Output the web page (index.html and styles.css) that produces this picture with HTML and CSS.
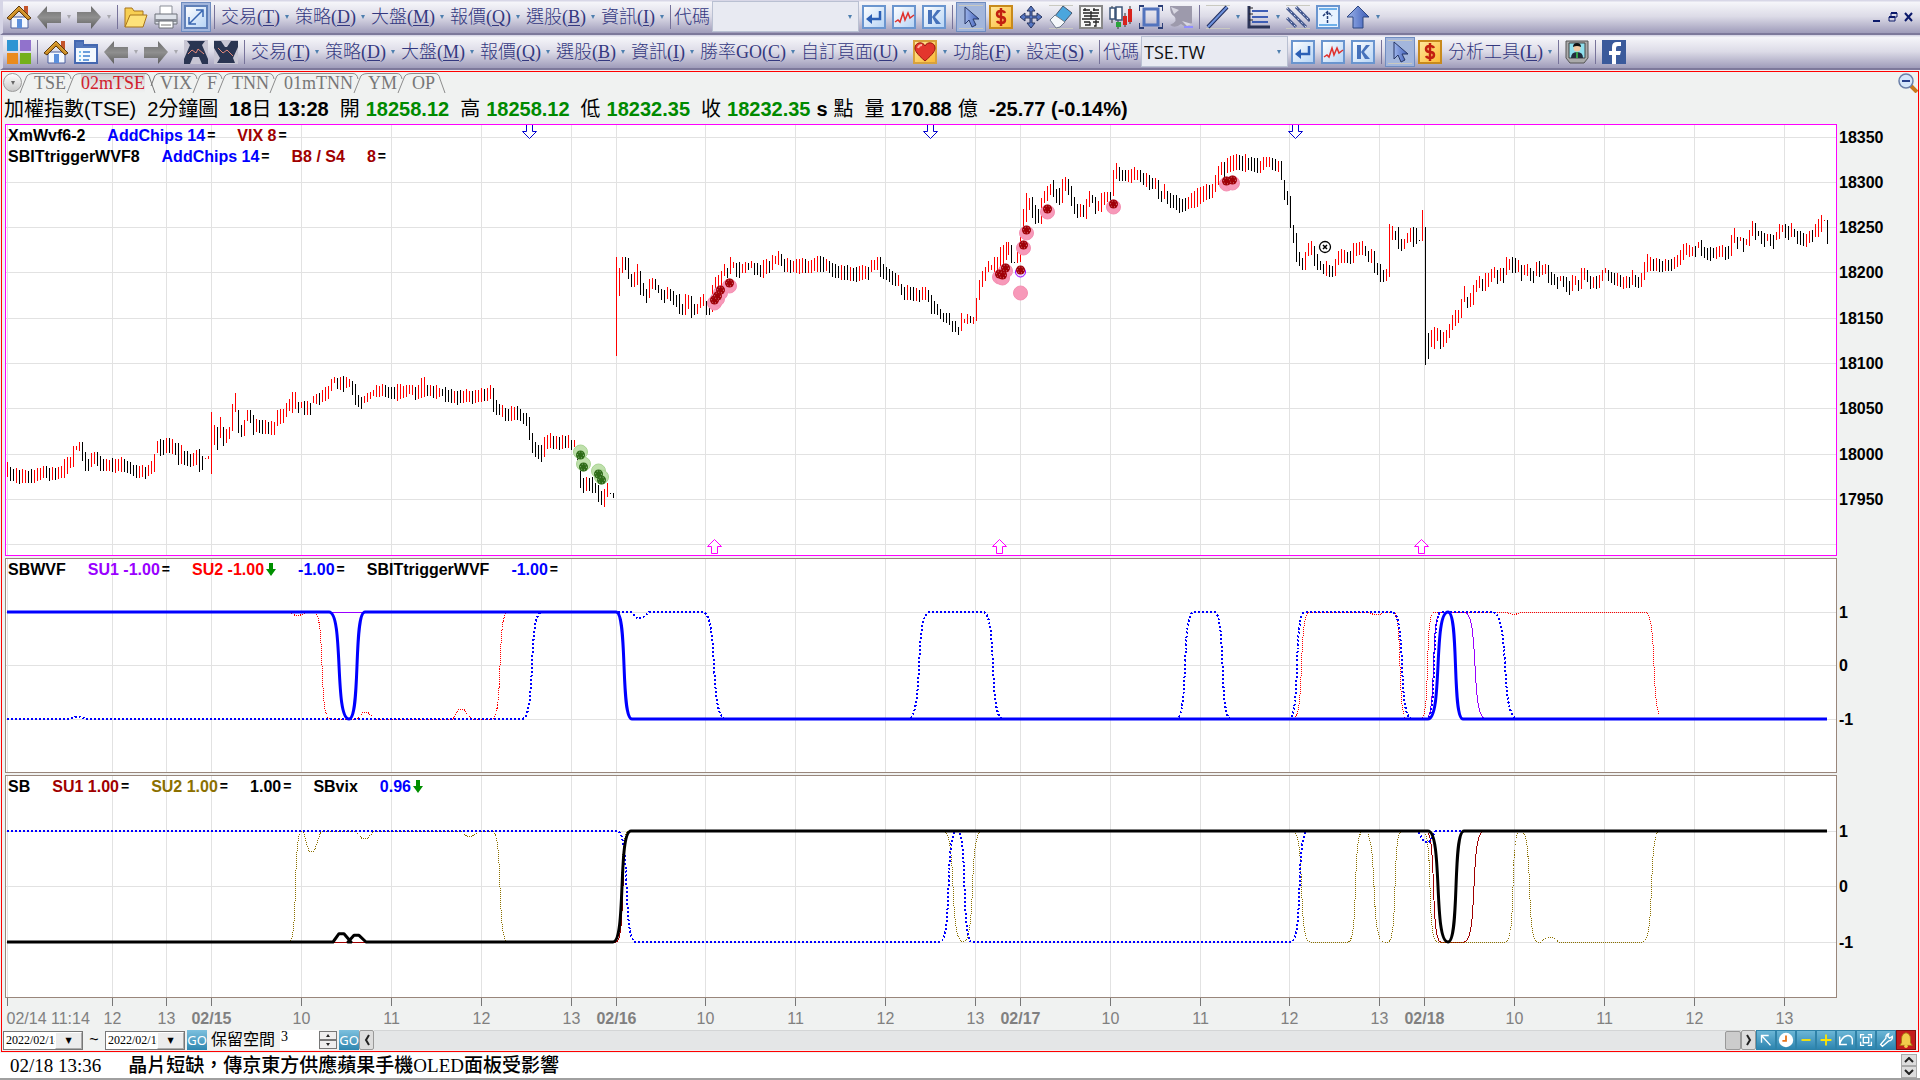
FILE: index.html
```html
<!DOCTYPE html>
<html lang="zh-Hant">
<head>
<meta charset="utf-8">
<title>加權指數(TSE) 2分鐘圖</title>
<link rel="stylesheet" href="styles.css">
</head>
<body>
<svg class="sprite" aria-hidden="true">
  <defs>
    <linearGradient id="g-arrow" x1="0" y1="0" x2="0" y2="1"><stop offset="0" stop-color="#6d6d6d"/><stop offset=".5" stop-color="#8f8f8f"/><stop offset="1" stop-color="#5c5c5c"/></linearGradient>
    <linearGradient id="g-tile" x1="0" y1="0" x2="1" y2="1"><stop offset="0" stop-color="#fff"/><stop offset="1" stop-color="#b5d3f5"/></linearGradient>
    <linearGradient id="g-gold" x1="0" y1="0" x2="1" y2="1"><stop offset="0" stop-color="#ffe9a0"/><stop offset="1" stop-color="#fbb832"/></linearGradient>
    <linearGradient id="g-blue" x1="0" y1="0" x2="1" y2="0"><stop offset="0" stop-color="#9db4ea"/><stop offset="1" stop-color="#3c5cb8"/></linearGradient>
  </defs>
  <symbol id="home" viewBox="0 0 24 24"><path d="M17 1h4v8h-4z" fill="#c4552c"/><path d="M4 12h17v11H4z" fill="#f4f8ff" stroke="#4a5e9e"/><path d="M10 14h5v9h-5z" fill="#5b8fdc"/><path d="M0 13 12 1l12 12-3 2-9-9-9 9z" fill="#c98a24" stroke="#5a3a10"/><path d="M2 12.500 12 2.500l10 10" fill="none" stroke="#e8b040"/></symbol>
  <symbol id="back" viewBox="0 0 24 24"><path d="M0 12 10 1v6h14v11H10v6z" fill="url(#g-arrow)"/></symbol>
  <symbol id="fwd" viewBox="0 0 24 24"><path d="M24 12 14 1v6H0v11h14v6z" fill="url(#g-arrow)"/></symbol>
  <symbol id="folder" viewBox="0 0 24 24"><path d="M1 22V3h7l2 3h9v4" fill="#f7cf52" stroke="#a8741a"/><path d="M1 22 6 10h17l-4 12z" fill="#fde27a" stroke="#a8741a"/></symbol>
  <symbol id="print" viewBox="0 0 24 24"><path d="M6 1h12v9H6z" fill="#fff" stroke="#8b8f98"/><path d="M1 9h22v10H1z" fill="#dfe3ea" stroke="#6c7078"/><path d="M1 14h22v3H1z" fill="#8c9099"/><path d="M5 16h14v7H5z" fill="#fff" stroke="#6c7078"/><path d="M7 20h10" stroke="#777"/></symbol>
  <symbol id="expand" viewBox="0 0 24 24"><path d="M1 1h22v22H1z" fill="url(#g-tile)" stroke="#5f80b8" stroke-width="2"/><path d="m6 18 12-12M12 5h7v7M5 12v7h7" fill="none" stroke="#3765b0" stroke-width="1.500"/></symbol>
  <symbol id="enter" viewBox="0 0 24 24"><path d="M1 1h22v22H1z" fill="url(#g-tile)" stroke="#6a95cf" stroke-width="2"/><path d="M18 6v8H8" fill="none" stroke="#2b5fb5" stroke-width="2.500"/><path d="m4 14 6-5v10z" fill="#2b5fb5"/></symbol>
  <symbol id="wave" viewBox="0 0 24 24"><path d="M1 1h22v22H1z" fill="url(#g-tile)" stroke="#6a95cf" stroke-width="2"/><path d="m3 17 3-2 2 2 3-9 2 7 3-7 2 5 4-3" fill="none" stroke="#e0302c" stroke-width="1.500"/></symbol>
  <symbol id="kline" viewBox="0 0 24 24"><path d="M1 1h22v22H1z" fill="url(#g-tile)" stroke="#6a95cf" stroke-width="2"/><path d="M6 5h4v14H6zM10 12l5-7h4l-6 7 6 7h-5z" fill="#4672bb"/></symbol>
  <symbol id="cursor" viewBox="0 0 24 24"><path d="M0 .5h24M0 23.500h24" stroke="#c9c9c0"/><path d="M6 2v17l4-4 3 7 4-2-3-6h6z" fill="url(#g-blue)" stroke="#273766"/></symbol>
  <symbol id="dollar" viewBox="0 0 24 24"><path d="M1 1h22v22H1z" fill="url(#g-gold)" stroke="#c88a1c" stroke-width="2"/><path d="M16 8q-1-2-4-2-4 0-4 3t4 3q4 0 4 3t-4 3q-3 0-4-2M12 3v18" fill="none" stroke="#c21f10" stroke-width="2.500"/></symbol>
  <symbol id="move" viewBox="0 0 24 24"><path d="M12 1l4 5h-3v5h5V8l5 4-5 4v-3h-5v5h3l-4 5-4-5h3v-5H6v3l-5-4 5-4v3h5V6H8z" fill="#5777c4" stroke="#26345e"/></symbol>
  <symbol id="eraser" viewBox="0 0 24 24"><path d="M0 .5h24M0 23.500h24" stroke="#c9c9c0"/><path d="M14 1 23 8 11 22 2 16z" fill="#4ba6dd" stroke="#44566e"/><path d="m1 15 5-5 10 7-5 5-4 1z" fill="#f4f7fa" stroke="#6d7a8a"/></symbol>
  <symbol id="abacus" viewBox="0 0 24 24"><path d="M1 1h22v22H1z" fill="#f6f6f6" stroke="#888" stroke-width="2"/><path d="M4 5h7M14 5h6M6 3v3M15 3v3M4 8h16M12 6v8M5 11h14M3 14h18M5 17h6M14 17h6M6 20h5v-3M17 15v6h-2" fill="none" stroke="#222" stroke-width="1.300"/></symbol>
  <symbol id="candles" viewBox="0 0 24 24"><path d="M3 1v17M9 15v9M16 8v14M21 1v18" stroke="#333"/><path d="M1 3h5v11H1zM7 2h6v13H7z" fill="#fff" stroke="#3d5578" stroke-width="1.500"/><path d="M7 17h5v5H7z" fill="#2aa33a"/><path d="M14 11h4v9h-4zM19 4h4v13h-4z" fill="#d8231c"/></symbol>
  <symbol id="frame" viewBox="0 0 24 24"><path d="M5 4h14v16H5z" fill="none" stroke="#5273bd" stroke-width="3"/><path d="M0 6V1h5M19 1h5v5M24 18v5h-5M5 23H0v-5" fill="none" stroke="#2c3f78" stroke-width="2"/></symbol>
  <symbol id="smudge" viewBox="0 0 24 24"><path d="M1 1h22v17q-5 6-11 1-6 5-11 1 9-4 4-9-4-2-4-10z" fill="#9d9aac"/><path d="m2 2 8 3-5 4zM13 16l5 5 5-2" fill="#d8d7e2"/><path d="M15 22h9" stroke="#8f8dff" stroke-width="2"/></symbol>
  <symbol id="line" viewBox="0 0 24 24"><path d="M0 .5h24M0 23.500h24" stroke="#c9c9c0"/><path d="M2 22 21 2" stroke="#1f2c5c" stroke-width="4"/><path d="M2 22 21 2" stroke="#6f92dc" stroke-width="2"/></symbol>
  <symbol id="axis" viewBox="0 0 24 24"><path d="M3 1v21h21" fill="none" stroke="#2c3458" stroke-width="3"/><path d="M6 6h16M6 12h16M6 17h16" stroke="#3f5eb5" stroke-width="2"/><path d="M3 3h4M3 9h4M3 15h4" stroke="#222"/></symbol>
  <symbol id="hatch" viewBox="0 0 24 24"><path d="M0 .5h24M0 23.500h24" stroke="#c9c9c0"/><path d="m1 3 19 19M10 2l14 14M1 13l9 9" stroke="#44588e" stroke-width="3"/><path d="m1 3 19 19M10 2l14 14M1 13l9 9" stroke="#cdd8f2" stroke-dasharray="2 3"/></symbol>
  <symbol id="range" viewBox="0 0 24 24"><path d="M1 1h22v22H1z" fill="#e9f3ff" stroke="#6a95cf" stroke-width="2"/><path d="M3 4h18M3 20h18" stroke="#6fb1ea" stroke-width="2"/><path d="M11.500 18V7M7 11l4.500-4.500L16 11" fill="none" stroke="#223c78" stroke-width="1.500" stroke-dasharray="3 1"/></symbol>
  <symbol id="up" viewBox="0 0 24 24"><path d="M12 1 23 12h-6v11H7V12H1z" fill="url(#g-blue)" stroke="#2d4680"/></symbol>
  <symbol id="tiles" viewBox="0 0 24 24"><path d="M0 0h11v11H0z" fill="#2e95d3"/><path d="M13 0h11v11H13z" fill="#9172cc"/><path d="M0 13h11v11H0z" fill="#e98b1e"/><path d="M13 13h11v11H13z" fill="#74b01c"/></symbol>
  <symbol id="pages" viewBox="0 0 24 24"><path d="M1 1h8v4h14v18H1z" fill="#f3f9ff" stroke="#4568b0" stroke-width="2"/><path d="M2 2h7v4h13v2H2z" fill="#5578bc"/><path d="M9 12h7M9 16h7M9 20h6" stroke="#3f7fcf" stroke-width="1.500"/><path d="M5 12h2M5 16h2M5 20h2" stroke="#4fb0e8" stroke-width="1.500"/></symbol>
  <symbol id="peak" viewBox="0 0 24 24"><path d="M0 0h24v24H0z" fill="#c8c6d4"/><path d="M3 1h18l-3 4 6 14v5h-6l-3-7H9l-3 7H0v-5L6 5z" fill="#2a3552"/><path d="m4 14 4-4 4 3 2-4 6 5" fill="none" stroke="#e58a7c"/></symbol>
  <symbol id="valley" viewBox="0 0 24 24"><path d="M0 0h24v24H0z" fill="#c8c6d4"/><path d="M0 1h7l4 6h2l4-6h7v6l-5 11 2 5H3l3-5L0 8z" fill="#2a3552"/><path d="m4 8 5 5 4-3 6 6" fill="none" stroke="#e58a7c"/></symbol>
  <symbol id="heart" viewBox="0 0 24 24"><path d="M1 1h22v22H1z" fill="url(#g-gold)" stroke="#d8a23c" stroke-width="2"/><path d="M12 21C4 14 2 11 2 8c0-6 8-7 10-2 2-5 10-4 10 2 0 3-2 6-10 13z" fill="#e3362d" stroke="#98140f"/><path d="M5 8q1-3 4-3" stroke="#ffb0a0" stroke-width="2" fill="none"/></symbol>
  <symbol id="person" viewBox="0 0 24 24"><path d="M1 1h22v17l-4 5H5l-4-5z" fill="#aaa" stroke="#555"/><path d="M4 3h16v15H4z" fill="#8fe0ee" stroke="#444"/><circle cx="12" cy="8" r="3.500" fill="#f1c7a0"/><path d="M8 7q0-4 4-4t4 4q-4-2-8 0z" fill="#111"/><path d="M6 18q0-6 6-6t6 6z" fill="#222c3c"/><path d="M11 12h2v6h-2z" fill="#32a04a"/></symbol>
  <symbol id="fb" viewBox="0 0 24 24"><path d="M0 0h24v24H0z" fill="#3a5a9b"/><path d="M14 24v-9h4l1-4h-5V8q0-2 2-2h3V2h-4q-5 0-5 5v4H7v4h3v9z" fill="#fff"/></symbol>
  <symbol id="zoomout" viewBox="0 0 20 20"><path d="m13 13 6 6" stroke="#c8781c" stroke-width="4"/><circle cx="8" cy="8" r="7" fill="#d5e6fb" stroke="#6a7fa8" stroke-width="1.500"/><path d="M4 8h8" stroke="#27408c" stroke-width="2"/></symbol>
  <symbol id="nw" viewBox="0 0 20 20"><path d="m5 5 10 11M5 13V5h8" fill="none" stroke="#fff" stroke-width="1.500"/></symbol>
  <symbol id="clock" viewBox="0 0 20 20"><circle cx="10" cy="10" r="8" fill="#fff"/><path d="M10 5v6H6" fill="none" stroke="#e8741c" stroke-width="2"/></symbol>
  <symbol id="minus" viewBox="0 0 20 20"><path d="M5 10h10" stroke="#ffe600" stroke-width="2"/></symbol>
  <symbol id="plus" viewBox="0 0 20 20"><path d="M4 10h12M10 4v12" stroke="#ffe600" stroke-width="2"/></symbol>
  <symbol id="undo" viewBox="0 0 20 20"><path d="M3 6v9h8M3 15C6 3 16 3 17 9v6" fill="none" stroke="#fff" stroke-width="1.500"/></symbol>
  <symbol id="fit" viewBox="0 0 20 20"><path d="M7 7h6v6H7zM4 8V4h4M12 4h4v4M16 12v4h-4M8 16H4v-4" fill="none" stroke="#fff" stroke-width="1.500"/></symbol>
  <symbol id="wrench" viewBox="0 0 20 20"><path d="M13 3a4 4 0 0 0-3 5l-6 7 2 2 7-6a4 4 0 0 0 4-5l-3 2-2-2z" fill="none" stroke="#fff" stroke-width="1.500"/></symbol>
  <symbol id="bell" viewBox="0 0 20 20"><path d="M10 2q5 1 5 7v4l2 3H3l2-3V9q0-6 5-7z" fill="#f2cc4c" stroke="#a87410"/><circle cx="10" cy="17" r="2" fill="#f2cc4c"/></symbol>
  <symbol id="split" viewBox="0 0 15 20"><path d="M0 .5Q4 .5 5 6M1 20 7 5Q8 .5 15 .5" fill="none" stroke="#8c8c8c"/></symbol>
  <symbol id="split-on" viewBox="0 0 15 20"><path d="M0 .5Q4 .5 5 6L10 20M6 13 9 5Q10 .5 15 .5" fill="none" stroke="#777"/></symbol>
</svg>

<nav class="toolbar" aria-label="工具列">
  <button class="icon" aria-label="首頁"><svg><use href="#home"/></svg></button>
  <button class="icon" aria-label="上一頁"><svg><use href="#back"/></svg></button><i class="caret dim"></i>
  <button class="icon" aria-label="下一頁"><svg><use href="#fwd"/></svg></button><i class="caret dim"></i>
  <span class="sep"></span>
  <button class="icon" aria-label="開啟"><svg><use href="#folder"/></svg></button>
  <button class="icon" aria-label="列印"><svg><use href="#print"/></svg></button>
  <button class="icon pressed" aria-label="全螢幕"><svg><use href="#expand"/></svg></button>
  <span class="sep"></span>
  <button class="menu">交易(<u>T</u>)</button>
  <button class="menu">策略(<u>D</u>)</button>
  <button class="menu">大盤(<u>M</u>)</button>
  <button class="menu">報價(<u>Q</u>)</button>
  <button class="menu">選股(<u>B</u>)</button>
  <button class="menu">資訊(<u>I</u>)</button>
  <span class="sep"></span>
  <div class="field"><label for="code1">代碼</label><span class="combo"><input id="code1" type="text" value=""></span></div>
  <button class="icon" aria-label="輸入"><svg><use href="#enter"/></svg></button>
  <button class="icon" aria-label="走勢"><svg><use href="#wave"/></svg></button>
  <button class="icon" aria-label="K線"><svg><use href="#kline"/></svg></button>
  <span class="sep"></span>
  <button class="icon pressed" aria-label="游標"><svg><use href="#cursor"/></svg></button>
  <button class="icon" aria-label="交易"><svg><use href="#dollar"/></svg></button>
  <button class="icon" aria-label="移動"><svg><use href="#move"/></svg></button>
  <button class="icon" aria-label="清除"><svg><use href="#eraser"/></svg></button>
  <button class="icon" aria-label="籌碼"><svg><use href="#abacus"/></svg></button>
  <button class="icon" aria-label="K棒"><svg><use href="#candles"/></svg></button>
  <button class="icon" aria-label="框選"><svg><use href="#frame"/></svg></button>
  <button class="icon" aria-label="塗抹"><svg><use href="#smudge"/></svg></button>
  <span class="sep"></span>
  <button class="icon" aria-label="直線"><svg><use href="#line"/></svg></button><i class="caret"></i>
  <button class="icon" aria-label="刻度"><svg><use href="#axis"/></svg></button><i class="caret"></i>
  <button class="icon" aria-label="平行線"><svg><use href="#hatch"/></svg></button>
  <button class="icon" aria-label="區間"><svg><use href="#range"/></svg></button>
  <button class="icon" aria-label="箭頭"><svg><use href="#up"/></svg></button><i class="caret"></i>
  <div class="window">
    <button aria-label="最小化"><svg width="12" height="12"><path d="M2 10h7" stroke="#0c1a6b" stroke-width="2"/></svg></button>
    <button aria-label="還原"><svg width="12" height="12"><path d="M4 5V2h6v4H8M2 6h6v4H2z" fill="none" stroke="#0c1a6b"/><path d="M4 2h6M2 6h6" stroke="#0c1a6b" stroke-width="2"/></svg></button>
    <button aria-label="關閉"><svg width="12" height="12"><path d="m2 2 7 8M9 2l-7 8" stroke="#0c1a6b" stroke-width="2"/></svg></button>
  </div>
</nav>

<nav class="toolbar" aria-label="主選單">
  <button class="icon" aria-label="視窗"><svg><use href="#tiles"/></svg></button>
  <span class="sep"></span>
  <button class="icon" aria-label="首頁"><svg><use href="#home"/></svg></button>
  <button class="icon" aria-label="頁面"><svg><use href="#pages"/></svg></button>
  <button class="icon" aria-label="上一頁"><svg><use href="#back"/></svg></button><i class="caret dim"></i>
  <button class="icon" aria-label="下一頁"><svg><use href="#fwd"/></svg></button><i class="caret dim"></i>
  <button class="icon" aria-label="上漲"><svg><use href="#peak"/></svg></button>
  <button class="icon" aria-label="下跌"><svg><use href="#valley"/></svg></button>
  <span class="sep"></span>
  <button class="menu">交易(<u>T</u>)</button>
  <button class="menu">策略(<u>D</u>)</button>
  <button class="menu">大盤(<u>M</u>)</button>
  <button class="menu">報價(<u>Q</u>)</button>
  <button class="menu">選股(<u>B</u>)</button>
  <button class="menu">資訊(<u>I</u>)</button>
  <button class="menu">勝率GO(<u>C</u>)</button>
  <button class="menu">自訂頁面(<u>U</u>)</button>
  <button class="icon" aria-label="最愛"><svg><use href="#heart"/></svg></button><i class="caret"></i>
  <button class="menu">功能(<u>F</u>)</button>
  <button class="menu">設定(<u>S</u>)</button>
  <span class="sep"></span>
  <div class="field"><label for="code2">代碼</label><span class="combo"><input id="code2" type="text" value="TSE.TW"></span></div>
  <button class="icon" aria-label="輸入"><svg><use href="#enter"/></svg></button>
  <button class="icon" aria-label="走勢"><svg><use href="#wave"/></svg></button>
  <button class="icon" aria-label="K線"><svg><use href="#kline"/></svg></button>
  <span class="sep"></span>
  <button class="icon pressed" aria-label="游標"><svg><use href="#cursor"/></svg></button>
  <button class="icon" aria-label="交易"><svg><use href="#dollar"/></svg></button>
  <button class="menu">分析工具(<u>L</u>)</button>
  <span class="sep"></span>
  <button class="icon" aria-label="客服"><svg><use href="#person"/></svg></button>
  <span class="sep"></span>
  <button class="icon" aria-label="Facebook"><svg><use href="#fb"/></svg></button>
</nav>

<main class="frame">
  <div class="tabs">
    <button class="round" aria-label="頁籤清單"><i class="caret"></i></button>
    <svg class="edge"><path d="M1 20 7 5Q8 .5 15 .5" fill="none" stroke="#8c8c8c"/></svg>
    <button class="tab">TSE</button><svg class="edge"><use href="#split"/></svg>
    <button class="tab on">02mTSE</button><svg class="edge"><use href="#split-on"/></svg>
    <button class="tab">VIX</button><svg class="edge"><use href="#split"/></svg>
    <button class="tab">F</button><svg class="edge"><use href="#split"/></svg>
    <button class="tab">TNN</button><svg class="edge"><use href="#split"/></svg>
    <button class="tab">01mTNN</button><svg class="edge"><use href="#split"/></svg>
    <button class="tab">YM</button><svg class="edge"><use href="#split"/></svg>
    <button class="tab">OP</button>
    <svg class="edge"><path d="M0 .5Q4 .5 5 6L10 20" fill="none" stroke="#8c8c8c"/></svg>
    <button class="zoomout" aria-label="縮小"><svg><use href="#zoomout"/></svg></button>
  </div>
  <header class="quote">
    <span class="name">加權指數(TSE)</span><span class="name">2分鐘圖</span>
    <span class="pair"><b>18<em>日</em></b><b>13:28</b></span>
    <span class="pair"><em>開</em><b class="down">18258.12</b></span>
    <span class="pair"><em>高</em><b class="down">18258.12</b></span>
    <span class="pair"><em>低</em><b class="down">18232.35</b></span>
    <span class="pair"><em>收</em><b class="down">18232.35</b><b>s</b><em>點</em></span>
    <span class="pair"><em>量</em><b>170.88</b><em>億</em></span>
    <b>-25.77 (-0.14%)</b>
  </header>

  <div class="row"><section class="panel price">
    <svg class="plot" id="price"></svg>
    <div class="legend">
      <p><b>XmWvf6-2</b><b class="blue">AddChips 14<s>=</s></b><b class="wine">VIX 8<s>=</s></b></p>
      <p><b>SBITtriggerWVF8</b><b class="blue">AddChips 14<s>=</s></b><b class="wine">B8 / S4</b><b class="wine">8<s>=</s></b></p>
    </div>
  </section><svg class="scale" id="price-scale"></svg></div>

  <div class="row"><section class="panel wvf">
    <svg class="plot" id="wvf"></svg>
    <div class="legend">
      <p><b>SBWVF</b><b class="purple">SU1 -1.00<s>=</s></b><b class="red">SU2 -1.00<svg width="10" height="13"><path d="M3 0h4v6h3L5 13 0 6h3z" fill="#009000"/></svg></b><b class="blue">-1.00<s>=</s></b><b>SBITtriggerWVF</b><b class="blue">-1.00<s>=</s></b></p>
    </div>
  </section><svg class="scale" id="wvf-scale"></svg></div>

  <div class="row"><section class="panel sb">
    <svg class="plot" id="sb"></svg>
    <div class="legend">
      <p><b>SB</b><b class="wine">SU1 1.00<s>=</s></b><b class="olive">SU2 1.00<s>=</s></b><b>1.00<s>=</s></b><b>SBvix</b><b class="blue">0.96<svg width="10" height="13"><path d="M3 0h4v6h3L5 13 0 6h3z" fill="#009000"/></svg></b></p>
    </div>
  </section><svg class="scale" id="sb-scale"></svg></div>

  <svg class="timeline" id="timeline"></svg>

  <form class="controls">
    <span class="drop"><select aria-label="起始日期"><option>2022/02/14</option></select></span>
    <span class="tilde">~</span>
    <span class="drop"><select aria-label="結束日期"><option>2022/02/18</option></select></span>
    <button type="button" class="go">GO</button>
    <label for="space">保留空間</label>
    <input id="space" class="space" type="text" value="3">
    <span class="spin"><button type="button" aria-label="增加"><i class="tri up"></i></button><button type="button" aria-label="減少"><i class="tri"></i></button></span>
    <button type="button" class="go">GO</button>
    <button type="button" class="step" aria-label="向左"><svg width="8" height="12"><path d="M6 1 3 6l3 5" fill="none" stroke="#222" stroke-width="2"/></svg></button>
    <div class="track"><span class="thumb"></span></div>
    <button type="button" class="step" aria-label="向右"><svg width="8" height="12"><path d="m2 1 3 5-3 5" fill="none" stroke="#222" stroke-width="2"/></svg></button>
    <span class="tools">
      <button type="button" aria-label="指標"><svg><use href="#nw"/></svg></button>
      <button type="button" aria-label="時間"><svg><use href="#clock"/></svg></button>
      <button type="button" aria-label="縮小"><svg><use href="#minus"/></svg></button>
      <button type="button" aria-label="放大"><svg><use href="#plus"/></svg></button>
      <button type="button" aria-label="復原"><svg><use href="#undo"/></svg></button>
      <button type="button" aria-label="符合"><svg><use href="#fit"/></svg></button>
      <button type="button" aria-label="設定"><svg><use href="#wrench"/></svg></button>
      <button type="button" class="alarm" aria-label="警示"><svg><use href="#bell"/></svg></button>
    </span>
  </form>
</main>

<footer class="news">
  <time>02/18 13:36</time>
  <span>晶片短缺，傳京東方供應蘋果手機OLED面板受影響</span>
  <div class="scroller">
    <button aria-label="上一則"><svg width="10" height="6"><path d="m1 5 4-4 4 4" fill="none" stroke="#222" stroke-width="2"/></svg></button>
    <button aria-label="下一則"><svg width="10" height="6"><path d="m1 1 4 4 4-4" fill="none" stroke="#222" stroke-width="2"/></svg></button>
  </div>
</footer>
<script src="chart.js"></script>
</body>
</html>
```
FILE: styles.css
```css
* { box-sizing: border-box; }
body {
  margin: 0;
  min-height: 100vh;
  display: flex;
  flex-direction: column;
  background: #f0f2f1;
  color: #000;
  font-family: "Liberation Sans", "Noto Sans CJK TC", sans-serif;
}
button { padding: 0; border: 0; background: none; font: inherit; color: inherit; }
svg { display: block; }
.sprite { position: absolute; width: 0; height: 0; }

/* toolbars */
.toolbar {
  display: flex;
  align-items: center;
  gap: 6px;
  height: 35px;
  padding: 0 5px 0 4px;
  border-left: 3px solid #d6d5e6;
  border-bottom: 2px solid #7d799b;
  background: linear-gradient(#d8d7e7 0 1px, #f6f6fa 2px, #dcdbe7 50%, #9f9cba);
  font-family: "Liberation Serif", "Noto Sans CJK TC", serif;
  font-size: 18px;
  font-weight: 300;
  line-height: 24px;
  color: #34387f;
  white-space: nowrap;
}
.icon { flex: none; width: 24px; height: 24px; }
.icon svg { width: 24px; height: 24px; }
.pressed {
  width: 30px;
  height: 30px;
  margin: 0 -3px;
  padding: 2px;
  border: 1px solid #6f8cc0;
  background: #a3b6dc;
}
.caret {
  flex: none;
  width: 0;
  height: 0;
  border: 2px solid transparent;
  border-top: 4px solid #4d7fae;
  border-bottom: 0;
}
.dim { border-top-color: #a8a8ae; }
.sep { flex: none; width: 1px; height: 24px; background: #77739a; }
.menu { display: flex; align-items: center; }
.menu::after {
  content: "";
  margin-left: 5px;
  border: 2px solid transparent;
  border-top: 4px solid #4d7fae;
  border-bottom: 0;
}
.menu u { text-underline-offset: 2px; }
.field { display: flex; align-items: center; gap: 2px; margin: 0 -3px; }
.combo {
  display: flex;
  align-items: center;
  width: 147px;
  height: 31px;
  padding-right: 6px;
  border: 1px solid #b9c0d2;
  background: #e8eaf2;
}
.combo input {
  flex: 1;
  min-width: 0;
  padding: 0 2px;
  border: 0;
  background: none;
  font: 18px/24px "Open Sans", sans-serif;
  color: #111;
}
.combo::after {
  content: "";
  border: 2px solid transparent;
  border-top: 4px solid #4d7fae;
  border-bottom: 0;
}
.window { display: flex; gap: 4px; margin-left: auto; }

/* chart window */
.frame {
  margin: 1px 1px 0;
  padding: 0 0 1px 3px;
  border: 1px solid #f00;
}
.tabs {
  display: flex;
  align-items: flex-end;
  height: 21px;
  font: 18px/20px "Liberation Serif", serif;
  color: #777;
}
.tab { height: 20px; border-top: 1px solid #8c8c8c; line-height: 19px; }
.tab.on { color: #d1202c; background: linear-gradient(#d2d2d4, #f0f2f1); }
.edge { flex: none; width: 15px; height: 20px; }
.round {
  display: grid;
  place-items: center;
  width: 19px;
  height: 19px;
  margin: 0 -3px 1px -2px;
  border: 1px solid #9a9a9a;
  border-radius: 50%;
  background: linear-gradient(#fff, #c8c8c8);
}
.round .caret { border-top-color: #666; }
.zoomout { margin-left: auto; }
.zoomout svg { width: 20px; height: 20px; }
.quote {
  display: flex;
  align-items: center;
  gap: 11px;
  height: 31px;
  margin-left: -1px;
  font-size: 20px;
  line-height: 30px;
  white-space: nowrap;
}
.quote em, .name { font-style: normal; font-weight: 400; }
.pair { display: flex; gap: 6px; }
.down { color: #008a00; }

.row { display: flex; margin-bottom: 2px; }
.panel { position: relative; flex: 1; min-width: 0; border: 1px solid #99867b; background: #fff; }
.price { height: 432px; border-color: #f0f; }
.wvf { height: 215px; }
.sb { height: 223px; }
.row:has(.sb) { margin-bottom: 0; }
.plot { width: 100%; height: 100%; }
.scale { flex: none; width: 81px; }
.scale text, .timeline text { font-size: 16px; }
.scale text { font-weight: 700; }
.timeline text { fill: #808080; }
.timeline { width: 100%; height: 32px; }
.legend { position: absolute; top: 0; left: 2px; font-size: 16px; line-height: 21px; }
.legend p { display: flex; gap: 22px; margin: 0; white-space: nowrap; }
.legend b { display: flex; align-items: center; gap: 2px; }
.legend s { color: #000; font-size: 14px; text-decoration: none; }
.blue { color: #00f; }
.wine { color: #a00000; }
.red { color: #f00; }
.purple { color: #90f; }
.olive { color: #8b7000; }

/* bottom strip */
.controls {
  display: flex;
  align-items: center;
  height: 20px;
  margin-left: -2px;
  font-size: 16px;
  line-height: 20px;
}
.drop {
  display: flex;
  width: 80px;
  height: 19px;
  border: 1px solid #777;
  background: #fff;
}
.drop select {
  flex: 1;
  min-width: 0;
  padding: 0 0 0 2px;
  border: 0;
  appearance: none;
  background: none;
  overflow: hidden;
  font: 12px/16px "Liberation Serif", serif;
}
.drop::after {
  content: "▼";
  width: 25px;
  border: 1px outset #fff;
  background: #ececec;
  font: 8px/15px "DejaVu Sans", sans-serif;
  text-align: center;
}
.tilde { width: 22px; text-align: center; }
.go {
  width: 20px;
  height: 20px;
  margin-left: 2px;
  background: linear-gradient(#7cc0de, #2f86b0);
  font: 13px/20px "Noto Sans", sans-serif;
  color: #fff;
}
.controls label { margin: 0 5px 0 4px; }
.space { width: 39px; height: 20px; padding: 0 0 6px 1px; border: 0; background: #fff; font: 14px/14px "Liberation Serif", serif; }
.spin { display: flex; flex-direction: column; width: 18px; }
.spin button { display: grid; place-items: center; height: 9px; border: 1px solid #777; background: #eee; }
.tri { border: 2px solid transparent; border-top: 3px solid #222; border-bottom: 0; }
.tri.up { border-top: 0; border-bottom: 3px solid #222; }
.step {
  display: grid;
  place-items: center;
  width: 15px;
  height: 20px;
  border: 1px solid #999;
  border-radius: 2px;
  background: #ddd;
}
.track { flex: 1; display: flex; justify-content: flex-end; height: 20px; border-top: 1px solid #d3d5d6; background: #e4e6e7; }
.thumb { width: 16px; border: 1px solid #999; border-radius: 2px; background: #ccc; }
.tools { display: flex; margin-right: 2px; }
.tools button { width: 20px; height: 20px; border: 1px solid #2f82a8; background: linear-gradient(#6cb6d6, #2d85b0); }
.tools svg { width: 18px; height: 18px; }
.tools .alarm { border-color: #801010; background: #c41c1c; }

.news {
  flex: 1;
  display: flex;
  align-items: center;
  gap: 27px;
  min-height: 26px;
  margin-top: 1px;
  padding: 0 3px 0 10px;
  border-bottom: 2px solid #a0a0a0;
  background: #fff;
  font: 500 19px/22px "Liberation Serif", "Noto Sans CJK TC", serif;
}
.scroller { display: flex; flex-direction: column; margin-left: auto; }
.scroller button { display: grid; place-items: center; width: 16px; height: 12px; border: 1px solid #aaa; background: #ddd; }
```
FILE: chart.js
```js
// Plot geometry: x runs on a 3-unit bar pitch and is fitted to the panel width.
const X0 = 6, SPAN = 1830;
const HOURS = [
  [7, '02/14 11:14', 'start'], [112, '12'], [166, '13'], [211, '02/15', 'day'],
  [301, '10'], [391, '11'], [481, '12'], [571, '13'], [616, '02/16', 'day'],
  [705, '10'], [795, '11'], [885, '12'], [975, '13'], [1020, '02/17', 'day'],
  [1110, '10'], [1200, '11'], [1289, '12'], [1379, '13'], [1424, '02/18', 'day'],
  [1514, '10'], [1604, '11'], [1694, '12'], [1784, '13']
];

// x, high, low (vertical unit: one third of a pixel)
const BARS = [
7,1026,1070,10,1042,1082,20,1050,1093,35,1050,1088,43,1038,1075,50,1045,1082,58,1042,1078,62,1038,1074,65,1018,1073,70,1010,1044,73,978,1040,77,978,990,80,966,994,82,966,1022,85,996,1052,88,1018,1052,91,998,1040,95,996,1032,100,1008,1052,105,1018,1052,115,1018,1058,121,1010,1055,127,1022,1060,135,1034,1074,145,1040,1076,151,1022,1063,154,1002,1055,157,962,998,160,956,1007,168,955,1000,175,968,1004,179,968,1035,185,994,1036,190,1002,1042,196,990,1036,200,986,1055,203,1007,1050,205,1014,1017,208,1008,1017,
211,876,1062,214,915,975,217,920,990,220,891,953,223,920,977,226,926,970,229,920,958,232,852,932,235,820,875,238,870,938,242,915,950,245,900,948,247,870,902,250,870,910,253,885,945,256,896,935,262,900,942,270,903,945,273,905,946,277,870,918,283,866,908,287,850,890,290,838,872,293,816,880,295,816,868,298,846,880,301,846,864,305,843,884,309,850,886,313,828,850,320,820,854,325,800,844,329,798,836,332,776,812,335,771,790,338,774,806,343,768,816,348,776,800,353,782,824,356,792,856,359,825,860,361,830,866,364,828,848,368,820,845,373,810,828,376,796,830,385,795,832,391,802,838,398,792,842,405,796,830,410,796,822,416,802,840,419,796,838,422,774,834,425,771,832,428,795,828,435,795,838,441,806,828,445,802,846,451,808,850,457,812,854,465,808,846,472,812,852,480,804,846,487,804,842,490,796,836,493,804,876,496,840,884,499,852,884,505,864,904,512,858,902,520,866,904,525,880,918,529,892,960,532,940,1000,535,966,1012,538,976,1018,541,976,1025,544,950,1010,547,946,986,550,938,984,553,948,988,560,952,990,567,944,985,571,960,990,574,960,982,577,982,1020,580,1030,1104,583,1074,1118,587,1072,1114,592,1072,1120,595,1090,1120,598,1095,1146,601,1112,1156,604,1106,1160,607,1090,1130,610,1118,1122,613,1118,1134,
616,411,707,618,444,527,621,411,458,624,411,450,627,414,476,630,462,500,633,456,500,636,432,494,639,453,524,642,488,528,645,508,548,648,478,534,651,474,508,656,478,510,660,508,540,663,510,550,667,500,538,672,514,554,676,526,562,679,522,582,682,552,585,685,522,586,688,525,568,690,528,594,693,552,586,696,552,582,699,530,564,702,522,558,705,543,585,708,564,584,711,495,575,714,470,520,717,464,510,720,453,500,723,432,468,726,444,474,729,411,462,732,427,445,735,430,470,738,426,475,741,432,460,745,426,458,750,422,445,753,430,466,759,434,470,762,420,475,765,418,462,768,424,460,771,404,450,774,407,432,777,393,434,780,402,438,783,416,456,790,420,458,800,416,462,810,420,460,816,408,455,822,410,456,828,424,458,832,430,472,840,435,480,850,440,482,855,440,486,862,434,480,868,442,480,872,420,455,876,412,450,879,412,470,885,440,480,892,452,495,897,465,498,900,492,524,905,500,540,912,500,544,918,510,546,924,500,540,927,510,545,930,525,582,936,552,585,942,580,606,948,580,616,951,602,636,954,604,636,957,622,644,960,580,632,963,596,608,966,582,612,972,592,612,975,534,604,978,480,540,981,452,500,984,440,484,987,423,456,990,434,450,993,411,460,996,412,470,999,380,460,1002,375,455,1005,366,420,1008,366,406,1011,375,430,1014,426,429,1017,394,430,
1020,352,425,1023,268,350,1026,219,306,1029,234,270,1032,232,294,1035,255,312,1038,268,310,1041,234,312,1044,212,250,1047,198,242,1050,192,225,1053,180,230,1056,207,250,1059,204,254,1062,178,250,1065,171,214,1068,177,225,1071,198,258,1074,232,282,1077,252,294,1083,256,292,1086,237,298,1089,212,262,1092,225,250,1095,232,282,1098,244,272,1101,220,275,1104,216,256,1107,216,246,1110,216,255,1113,150,228,1116,128,178,1119,141,182,1125,150,184,1130,146,188,1134,142,180,1140,150,186,1145,160,202,1150,164,210,1155,174,208,1158,180,236,1161,212,245,1164,192,236,1170,220,264,1175,226,270,1180,234,278,1186,235,272,1191,220,265,1198,205,260,1203,198,245,1209,195,236,1212,192,234,1215,165,215,1218,138,196,1221,126,165,1224,126,170,1227,114,160,1233,105,152,1240,105,150,1244,102,156,1247,114,150,1256,114,158,1260,122,160,1263,110,150,1267,110,140,1272,114,150,1277,122,156,1280,123,180,1283,180,240,1286,212,254,1289,228,323,1292,316,368,1295,340,426,1298,396,438,1301,414,450,1304,396,450,1307,370,408,1310,364,405,1313,378,438,1316,402,450,1319,424,450,1322,432,462,1325,422,468,1328,435,471,1331,438,470,1334,418,468,1337,393,435,1342,388,430,1350,392,432,1353,370,430,1356,368,408,1361,364,405,1364,378,408,1367,392,426,1370,388,428,1373,393,458,1376,430,465,1379,432,486,1382,450,486,1385,448,482,1388,312,470,1391,318,360,1394,334,360,1397,322,386,1400,357,392,1403,357,388,1406,340,370,1409,324,365,1412,321,380,1415,324,372,1418,360,362,1421,270,362,
1424,321,735,1427,640,716,1430,630,680,1433,620,686,1436,625,662,1439,630,686,1442,636,680,1445,630,668,1448,612,654,1451,585,630,1454,570,618,1457,570,608,1460,538,594,1463,498,545,1466,530,563,1469,519,562,1472,495,556,1475,480,515,1478,468,505,1481,476,514,1484,460,512,1487,458,500,1490,448,486,1493,440,475,1496,450,492,1499,444,482,1502,444,488,1505,411,464,1508,418,450,1511,411,458,1514,414,458,1517,420,456,1520,434,482,1523,436,466,1526,432,468,1529,444,482,1532,452,490,1535,426,468,1538,423,470,1541,434,464,1544,432,462,1547,436,490,1550,456,496,1553,462,494,1556,470,506,1559,468,484,1562,468,500,1565,470,515,1568,484,524,1571,465,514,1574,468,496,1577,480,512,1580,444,508,1583,445,480,1586,450,486,1589,468,508,1595,468,508,1598,465,504,1601,450,482,1604,444,460,1607,450,484,1610,456,488,1616,460,498,1622,472,506,1628,470,504,1631,450,496,1634,466,500,1637,472,504,1640,458,500,1643,426,480,1646,402,456,1649,411,452,1652,416,454,1660,418,456,1670,418,454,1676,406,442,1679,390,436,1682,372,420,1685,370,406,1688,374,412,1694,378,410,1697,366,384,1700,360,408,1703,380,414,1709,382,422,1715,380,416,1722,376,410,1725,380,420,1728,378,418,1731,345,408,1733,324,370,1736,350,386,1739,352,362,1742,354,395,1745,357,376,1748,330,378,1751,303,348,1754,308,360,1757,334,348,1760,334,372,1763,338,380,1766,342,362,1772,346,386,1775,336,360,1778,312,356,1781,314,336,1784,312,354,1787,318,360,1790,308,350,1793,326,350,1796,334,372,1800,334,376,1806,342,380,1809,334,370,1812,330,366,1815,312,350,1818,297,350,1821,285,335,1824,300,302,1827,300,372
];

const SELL = [[580, 455], [583, 467], [598, 474], [601, 480]];
const BUY = [[714, 300], [717, 296], [720, 290], [729, 283], [999, 274], [1002, 275], [1005, 268],
  [1023, 245], [1026, 230], [1047, 209], [1113, 204], [1226, 181], [1232, 180]];

// Oscillators: start level, then [from, to, level] transitions; entries led by 'p' are small peaks.
const WVF = [
  { color: '#90f', w: 1, start: 1, moves: [[617, 632, -1], [1426, 1441, 1], [1464, 1486, -1]] },
  { color: '#f00', w: 1, dash: '1 1', start: 1, moves: [['p', 298, .94], [314, 330, -1], ['p', 366, -.88], ['p', 462, -.82], [492, 508, 1], [616, 632, -1], [1293, 1310, 1], ['p', 1377, .95], [1393, 1407, -1], [1421, 1434, 1], ['p', 1514, .96], [1645, 1663, -1]] },
  { color: '#00f', w: 2, dash: '2 2', start: -1, moves: [['p', 78, -.96], [522, 542, 1], ['p', 640, .88], [702, 726, -1], [908, 930, 1], [983, 1003, -1], [1176, 1194, 1], [1214, 1231, -1], [1289, 1305, 1], [1392, 1412, -1], [1427, 1441, 1], [1492, 1518, -1]] },
  { color: '#00f', w: 3, start: 1, moves: [[329, 349, -1], [349, 365, 1], [616, 632, -1], [1428, 1448, 1], [1448, 1463, -1]] }
];
const SB = [
  { color: '#a00000', w: 1, start: -1, moves: [[616, 630, 1], [1426, 1441, -1], [1464, 1484, 1]] },
  { color: '#8b7000', w: 1, dash: '1 1', start: -1, moves: [[289, 302, 1], ['p', 312, .63], ['p', 365, .86], ['p', 470, .9], [492, 508, -1], [614, 629, 1], [943, 963, -1], [963, 982, 1], [1293, 1310, -1], [1348, 1363, 1], [1364, 1384, -1], [1388, 1402, 1], [1423, 1437, -1], [1506, 1520, 1], [1521, 1538, -1], ['p', 1550, -.91], [1643, 1660, 1]] },
  { color: '#00f', w: 2, dash: '2 2', start: 1, moves: [[617, 636, -1], [940, 957, 1], [957, 972, -1], [1291, 1308, 1], ['p', 1427, .8]] },
  { color: '#000', w: 3, start: -1, moves: [['p', 342, -.85], ['p', 357, -.88], [613, 631, 1], [1428, 1448, -1], [1448, 1464, 1]] }
];

const NS = 'http://www.w3.org/2000/svg';
function add(svg, tag, attrs, text) {
  const el = document.createElementNS(NS, tag);
  for (const key in attrs) el.setAttribute(key, attrs[key]);
  if (text) el.textContent = text;
  svg.appendChild(el);
}
const byId = id => document.getElementById(id);
let px;

function grid(svg, ys) {
  const w = svg.clientWidth, h = svg.clientHeight;
  let d = '';
  HOURS.forEach(([x]) => { d += `M${Math.round(px(x)) + .5} 0V${h}`; });
  ys.forEach(y => { d += `M0 ${y}.5H${w}`; });
  add(svg, 'path', { d, stroke: '#e2e2e2', fill: 'none' });
}

function scale(id, labels) {
  const svg = byId(id);
  svg.replaceChildren();
  labels.forEach(([y, label]) => add(svg, 'text', { x: 2, y: y + 7 }, label));
}

function drawPrice() {
  const svg = byId('price');
  svg.replaceChildren();
  const ys = [12, 57, 102, 147, 193, 238, 283, 329, 374, 419];
  grid(svg, ys);
  const paths = { '#f00': '', '#000': '' };
  let i = 0, prev = 1060;
  for (let n = 0; n <= 607; n++) {
    const x = 7 + n * 2.9985;
    while (i + 3 < BARS.length - 3 && BARS[i + 3] <= x) i += 3;
    const near = Math.abs(BARS[i + 3] - x) < 1.5 ? i + 3 : i;
    const t = Math.min(1, Math.max(0, (x - BARS[i]) / (BARS[i + 3] - BARS[i])));
    let hi, lo;
    if (x - BARS[i] < 1.5 || near !== i) { hi = BARS[near + 1]; lo = BARS[near + 2]; }
    else {
      const wobble = (n * 7) % 5 - 2;
      hi = BARS[i + 1] + t * (BARS[i + 4] - BARS[i + 1]) + wobble * 2;
      lo = BARS[i + 2] + t * (BARS[i + 5] - BARS[i + 2]) - (n * 11) % 4;
    }
    const mid = (hi + lo) / 2;
    const rising = n === 203 || mid + ((n * 37) % 11 - 6) < prev;
    prev = mid;
    paths[rising ? '#f00' : '#000'] += `M${Math.round(px(x)) + .5} ${Math.round(hi / 3) - 5}V${Math.max(Math.round(lo / 3), Math.round(hi / 3) + 1) - 5}`;
  }
  for (const stroke in paths) add(svg, 'path', { d: paths[stroke], stroke, fill: 'none' });

  const dot = (x, y, halo, rim, core) => {
    add(svg, 'circle', { cx: px(x) + .5, cy: y, r: 7, fill: halo, stroke: rim });
    return () => {
      add(svg, 'circle', { cx: px(x) + .5, cy: core.y, r: 4.5, fill: core.fill });
      add(svg, 'circle', { cx: px(x) + .5, cy: core.y, r: 3, fill: 'none', stroke: '#fff', 'stroke-opacity': .5, 'stroke-dasharray': '1 2' });
    };
  };
  const cores = [
    ...SELL.map(([x, y]) => dot(x, y - 128, '#bfe0ac', '#a9d493', { y: y - 125, fill: '#2d6b17' })),
    ...BUY.map(([x, y]) => dot(x, y - 122, '#f799b9', '#f58fb2', { y: y - 125, fill: '#a00008' }))
  ];
  add(svg, 'circle', { cx: px(1020) + .5, cy: 168, r: 7, fill: '#f799b9', stroke: '#f58fb2' });
  add(svg, 'circle', { cx: px(1020) + .5, cy: 147, r: 5, fill: '#e9d5ff', stroke: '#90f' });
  cores.push(dot(1020, 145, 'none', 'none', { y: 145, fill: '#a00008' }));
  cores.forEach(draw => draw());

  add(svg, 'circle', { cx: px(1325), cy: 122, r: 5.5, fill: '#fff', stroke: '#000', 'stroke-width': 1.3 });
  add(svg, 'path', { d: `M${px(1325) - 2} 120l4 4m0-4l-4 4`, stroke: '#000', 'stroke-width': 1.5 });
  [529, 930, 1295].forEach(x => add(svg, 'path', { d: `M${px(x) - 2.5} 0v6.500h-4l7 7l7-7h-4v-6.500`, fill: '#fff', stroke: '#0000d0' }));
  [714, 999, 1421].forEach(x => add(svg, 'path', { d: `M${px(x) + .5} 414.500l7 7h-4v7h-6v-7h-4z`, fill: '#fff', stroke: '#f0f' }));
  scale('price-scale', ys.slice(0, 9).map((y, k) => [y, String(18350 - 50 * k)]));
}

function drawOscillator(id, series, hi, lo) {
  const svg = byId(id), mid = Math.round((hi + lo) / 2) - 1;
  svg.replaceChildren();
  grid(svg, [hi, mid, lo]);
  const yOf = v => hi + (1 - v) * (lo - hi) / 2;
  series.forEach(s => {
    let level = s.start, d = `M${px(7)} ${yOf(level)}`;
    s.moves.forEach(([a, b, v]) => {
      if (a === 'p') {
        d += `H${px(b - 9)}L${px(b - 3)} ${yOf(v)}H${px(b + 2)}L${px(b + 9)} ${yOf(level)}`;
      } else {
        const w = b - a;
        d += `H${px(a)}C${px(a + w * .75)} ${yOf(level)} ${px(a + w * .25)} ${yOf(v)} ${px(b)} ${yOf(v)}`;
        level = v;
      }
    });
    d += `H${px(1827)}`;
    add(svg, 'path', {
      d, fill: 'none', stroke: s.color, 'stroke-width': s.w,
      'stroke-dasharray': s.dash || 'none', 'stroke-linejoin': 'round',
      'shape-rendering': s.w === 3 ? 'auto' : 'crispEdges'
    });
  });
  scale(id + '-scale', [[hi, '1'], [mid, '0'], [lo, '-1']]);
}

function drawTimeline() {
  const svg = byId('timeline');
  svg.replaceChildren();
  HOURS.forEach(([x, label, kind]) => {
    const at = Math.round(px(x)) + 1.5;
    add(svg, 'path', { d: `M${at} 0v8`, stroke: '#777' });
    add(svg, 'text', {
      x: kind === 'start' ? at - 1 : at, y: 26,
      'text-anchor': kind === 'start' ? 'start' : 'middle',
      'font-weight': kind === 'day' ? 700 : 400
    }, label);
  });
}

function draw() {
  const k = byId('price').clientWidth / SPAN;
  px = x => (x - X0) * k;
  drawPrice();
  drawOscillator('wvf', WVF, 53, 160);
  drawOscillator('sb', SB, 55, 166);
  drawTimeline();
}
draw();
window.addEventListener('resize', draw);
```
